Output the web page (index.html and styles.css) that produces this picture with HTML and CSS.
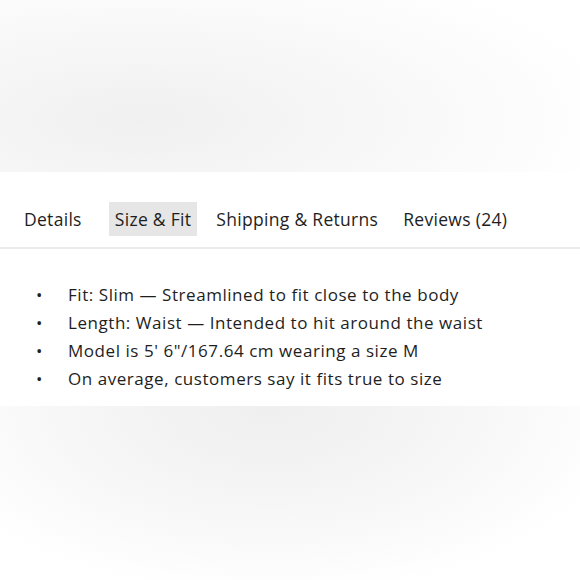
FILE: index.html
```html
<!DOCTYPE html>
<html>
<head>
<meta charset="utf-8">
<link rel="stylesheet" href="styles.css">
</head>
<body>
<div class="hero"></div>
<section class="panel">
  <nav class="tabs">
    <span class="tab">Details</span>
    <span class="tab active">Size &amp; Fit</span>
    <span class="tab">Shipping &amp; Returns</span>
    <span class="tab">Reviews (24)</span>
  </nav>
  <ul class="facts">
    <li>Fit: Slim — Streamlined to fit close to the body</li>
    <li>Length: Waist — Intended to hit around the waist</li>
    <li>Model is 5' 6"/167.64 cm wearing a size M</li>
    <li>On average, customers say it fits true to size</li>
  </ul>
</section>
<div class="footer-blur"></div>
</body>
</html>
```

FILE: styles.css
```css
html, body {
  margin: 0;
  padding: 0;
  background: #fff;
}
body {
  width: 580px;
  height: 580px;
  overflow: hidden;
  font-family: "Open Sans", "Noto Sans", sans-serif;
  color: #1e1e1e;
}
.hero {
  height: 172px;
  background: radial-gradient(ellipse 480px 170px at 140px 120px, #f0f0f0 0%, #f6f6f6 40%, #fcfcfc 80%, #fff 100%);
}
.panel {
  background: #fff;
  padding-top: 30px;
  padding-bottom: 13px;
}
.tabs {
  display: flex;
  align-items: center;
  gap: 13px;
  padding-left: 18px;
  height: 34px;
  border-bottom: 2px solid #ececec;
  padding-bottom: 11px;
}
.tab {
  font-size: 17.5px;
  letter-spacing: 0.3px;
  line-height: 34px;
  padding: 0 6px;
  white-space: nowrap;
}
.tab:first-child {
  margin-right: 8px;
}
.tab.active {
  background: #e6e6e6;
}
.facts {
  list-style: none;
  margin: 32px 0 0 0;
  padding: 0 0 0 36px;
  font-size: 17px;
  letter-spacing: 0.55px;
  line-height: 28px;
}
.facts li {
  display: flex;
}
.facts li::before {
  content: "•";
  width: 32px;
  flex: none;
  font-size: 17px;
}
.footer-blur {
  height: 174px;
  background: radial-gradient(ellipse 360px 190px at 270px 0px, #efefef 0%, #f4f4f4 40%, #fbfbfb 80%, #fff 100%);
}
```
